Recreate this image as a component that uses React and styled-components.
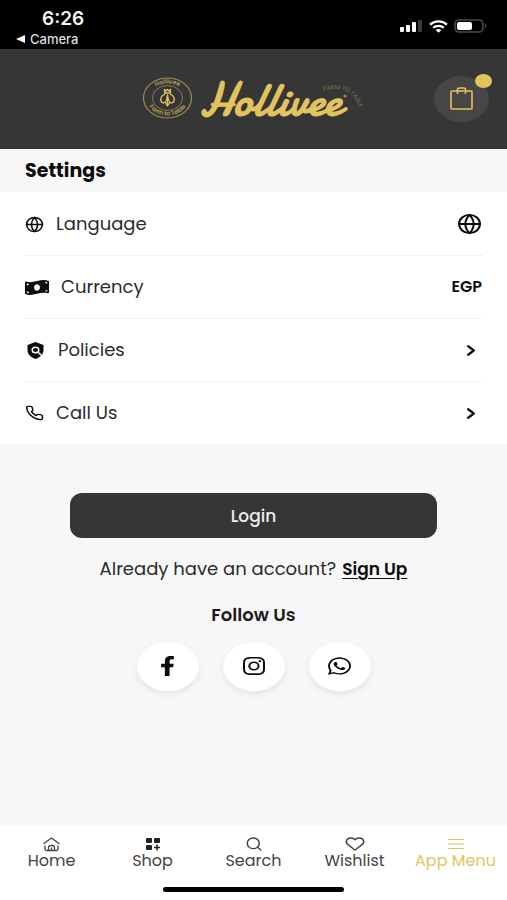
import React from "react";
import styled, { createGlobalStyle } from "styled-components";
import { FaFacebookF, FaMoneyBillWave, FaWhatsapp } from "react-icons/fa";
import { BsInstagram } from "react-icons/bs";
import { FiGlobe, FiHeart, FiPhone, FiSearch, FiChevronRight } from "react-icons/fi";

const gold = "#e2c45f";
const dark = "#363636";

const GlobalStyle = createGlobalStyle`
  * {
    box-sizing: border-box;
  }

  body {
    margin: 0;
    background: #f7f7f7;
    color: #2b2b2b;
    font-family: Poppins, Inter, "Open Sans", sans-serif;
    font-size: 18px;
    line-height: 24px;
  }
`;

const Page = styled.div`
  display: flex;
  flex-direction: column;
  min-height: 100vh;
`;

const Main = styled.main`
  display: flex;
  flex: 1;
  flex-direction: column;
`;

const StatusBar = styled.div`
  display: flex;
  justify-content: space-between;
  height: 49px;
  padding: 10px 20px 0 16px;
  background: #000;
  color: #f4f4f4;
  font-family: Inter, sans-serif;
`;

const Clock = styled.div`
  padding-left: 26px;
  font-size: 19px;
  font-weight: 600;
  line-height: 18px;
`;

const BackLink = styled.a`
  display: flex;
  align-items: center;
  gap: 5px;
  color: #ddd;
  font-size: 13px;
  font-weight: 500;
  line-height: 22px;
  text-decoration: none;
`;

const Signals = styled.div`
  display: flex;
  align-items: center;
  gap: 6px;
  height: 32px;
`;

const TopBar = styled.header`
  display: grid;
  grid-template-columns: 1fr auto 1fr;
  align-items: center;
  height: 100px;
  padding: 0 18px;
  background: ${dark};
`;

const BagButton = styled.button`
  position: relative;
  display: flex;
  align-items: center;
  justify-content: center;
  justify-self: end;
  width: 55px;
  height: 46px;
  padding: 0;
  border: 0;
  border-radius: 50%;
  background: #474645;
  color: ${gold};
`;

const Badge = styled.span`
  position: absolute;
  top: -2px;
  right: -3px;
  width: 17px;
  height: 14px;
  border-radius: 50%;
  background: ${gold};
`;

const Glyph = styled.span`
  display: flex;

  svg {
    width: ${(props) => props.$width}px;
    height: ${(props) => props.$height}px;
  }
`;

const Title = styled.h1`
  margin: 0;
  padding: 10px 25px 9px;
  color: #0c0c0c;
  font-size: 19px;
  font-weight: 700;
  line-height: 24px;
`;

const List = styled.ul`
  margin: 0;
  padding: 1px 24px 0;
  background: #fff;
  list-style: none;
`;

const Item = styled.li`
  & + & {
    border-top: 1px solid #f1f1f1;
  }
`;

const RowButton = styled.button`
  display: flex;
  align-items: center;
  width: 100%;
  height: 62px;
  padding: 0 1px;
  border: 0;
  background: none;
  color: #0c0c0c;
  font: inherit;
`;

const RowLabel = styled.span`
  flex: 1;
  margin-left: 12px;
  color: #2b2b2b;
  text-align: left;
`;

const RowValue = styled.span`
  display: flex;
  font-size: 16px;
  font-weight: 600;
`;

const Account = styled.section`
  display: flex;
  flex: 1;
  flex-direction: column;
  align-items: center;
  padding: 49px 70px 0;
`;

const LoginButton = styled.button`
  width: 100%;
  height: 45px;
  border: 0;
  border-radius: 12px;
  background: ${dark};
  color: #eee;
  font: inherit;
  font-size: 17px;
  font-weight: 500;
`;

const SignUpText = styled.p`
  margin: 19px 0 0;
  white-space: nowrap;
`;

const SignUpLink = styled.a`
  margin-left: 6px;
  color: #0c0c0c;
  font-size: 17px;
  font-weight: 600;
  text-underline-offset: 3px;
`;

const FollowTitle = styled.h2`
  margin: 22px 0 15px;
  color: #1c1c1c;
  font-size: 18px;
  font-weight: 600;
  line-height: 24px;
`;

const SocialLinks = styled.div`
  display: flex;
  gap: 24px;
`;

const SocialLink = styled.a`
  display: flex;
  align-items: center;
  justify-content: center;
  width: 62px;
  height: 49px;
  padding-bottom: 2px;
  border-radius: 50%;
  background: #fff;
  box-shadow: 0 3px 6px rgba(0, 0, 0, 0.08);
  color: #0c0c0c;
`;

const BottomBar = styled.footer`
  padding: 10px 1px 8px;
  background: #fff;
`;

const Tabs = styled.nav`
  display: grid;
  grid-template-columns: repeat(5, 1fr);
`;

const Tab = styled.a`
  display: flex;
  flex-direction: column;
  align-items: center;
  color: ${(props) => (props.$active ? gold : "#444")};
  font-size: 16px;
  line-height: 18px;
  text-decoration: none;
  white-space: nowrap;
`;

const HomeIndicator = styled.div`
  width: 36%;
  height: 5px;
  margin: 17px auto 0;
  border-radius: 3px;
  background: #000;
`;

function StatusIcons() {
  return (
    <Signals>
      <svg width="23" height="12" viewBox="0 0 23 12" fill="#fff">
        <rect y="7" width="4" height="5" rx="1" />
        <rect x="6" y="5" width="4" height="7" rx="1" />
        <rect x="12" y="2" width="4" height="10" rx="1" />
        <rect x="18" width="4" height="12" rx="1" fill="#3a3a3a" />
      </svg>
      <svg width="19" height="13" viewBox="0 0 19 13" fill="none" stroke="#fff" strokeWidth="2.2">
        <path d="M1 4.6C5.8.3 13.2.3 18 4.6" />
        <path d="M4.2 7.8c3-2.7 7.6-2.7 10.6 0" />
        <path d="M9.5 12.8 6.7 10c1.6-1.3 4-1.3 5.6 0z" fill="#fff" stroke="none" />
      </svg>
      <svg width="33" height="14" viewBox="0 0 33 14">
        <rect x="1" y="1" width="28" height="12" rx="4" fill="none" stroke="#4a4a4a" strokeWidth="1.6" />
        <rect x="3" y="3" width="15" height="8" rx="2" fill="#fff" />
        <path d="M31 4.6c2 .8 2 4 0 4.8z" fill="#4a4a4a" />
      </svg>
    </Signals>
  );
}

function Logo() {
  return (
    <svg width="224" height="72" viewBox="0 -10 224 72" role="img" aria-label="Hollivee">
      <defs>
        <path id="seal-top" d="M6.500 25a19 14.500 0 0 1 38 0" />
        <path id="seal-bottom" d="M4.500 25a21 17.500 0 0 0 42 0" />
        <path id="tagline" d="M182 18Q213 10 218 40" />
      </defs>
      <g fill="none" stroke="#9f8d50">
        <ellipse cx="25.500" cy="25" rx="24" ry="20" strokeWidth="1.200" />
        <ellipse cx="25.500" cy="25" rx="15" ry="12.500" strokeWidth=".8" />
      </g>
      <g fill="#b5a05a" fontFamily="Poppins, sans-serif" fontSize="6" fontWeight="600" textAnchor="middle">
        <text>
          <textPath href="#seal-top" startOffset="50%">Hollivee</textPath>
        </text>
        <text>
          <textPath href="#seal-bottom" startOffset="50%">Farm to Table</textPath>
        </text>
      </g>
      <g fill="none" stroke={gold} strokeWidth="1.300" strokeLinejoin="round">
        <path d="M22.500 16.500v3.500h6v-3.500l-1.500 1.500-1.500-1.500-1.500 1.500z" />
        <path d="M23 21c-5 2-5.500 7-2 9 3 0 4-3 4.500-8 .5 5 1.500 8 4.500 8 3.500-2 3-7-2-9" />
        <path d="M23 29l2.500 4 2.500-4M25.500 22v10" />
      </g>
      <text
        x="58"
        y="42"
        fill={gold}
        stroke={gold}
        strokeWidth="1"
        strokeLinejoin="round"
        fontFamily="Yellowtail, Damion, Pacifico, 'Dancing Script', Lato, sans-serif"
        fontSize="48"
      >
        Hollivee
      </text>
      <circle cx="203" cy="23" r="1.500" fill="#9f8d50" />
      <text fill="#87784a" fontFamily="Poppins, sans-serif" fontSize="6">
        <textPath href="#tagline">FARM TO TABLE</textPath>
      </text>
    </svg>
  );
}

function BagIcon() {
  return (
    <svg width="24" height="24" viewBox="0 0 24 24" fill="none" stroke="currentColor" strokeWidth="1.600">
      <rect x="1" y="4" width="21" height="18" rx="1" />
      <path d="M7.500 7V2.500Q7.500 1 9.500 1h4q2 0 2 1.500V7" />
    </svg>
  );
}

function PolicyIcon() {
  return (
    <svg viewBox="0 0 20 17">
      <path d="M10 0 18 3v5c0 4-3 7.500-8 9-5-1.500-8-5-8-9V3z" fill="currentColor" />
      <ellipse cx="10" cy="8" rx="3.300" ry="2.800" fill="none" stroke="#fff" strokeWidth="1.500" />
      <path d="m12.200 10 4.500 4" stroke="#fff" strokeWidth="1.600" />
    </svg>
  );
}

function HomeIcon() {
  return (
    <svg viewBox="0 0 17 16" fill="none" stroke="currentColor" strokeWidth="1.300">
      <path d="M1 7.500 8.500 2 16 7.500" strokeLinecap="round" />
      <path d="M2 9.500v3.500q0 1.500 1.500 1.500h10q1.500 0 1.500-1.500V9.500" />
      <path d="M5.500 14.500v-3q0-2 3-2t3 2v3M8.500 11.500v3" />
    </svg>
  );
}

function ShopIcon() {
  return (
    <svg viewBox="0 0 16 16" fill="#222">
      <rect x="1" y="2" width="6" height="5" rx="1" />
      <rect x="9" y="2" width="6" height="5" rx="1" />
      <rect x="1" y="9" width="6" height="5" rx="1" />
      <path d="M12 8.500v6M9 11.500h6" stroke="#222" strokeWidth="1.500" />
    </svg>
  );
}

function MenuIcon() {
  return (
    <svg viewBox="0 0 16 16" stroke="currentColor" strokeWidth="1.200">
      <path d="M0 3.500h16M0 8h16M0 12.500h16" />
    </svg>
  );
}

function icon(Icon, width, height, props) {
  return (
    <Glyph $width={width} $height={height}>
      <Icon preserveAspectRatio="none" {...props} />
    </Glyph>
  );
}

const chevron = icon(FiChevronRight, 22, 17, { strokeWidth: 3 });

const settings = [
  { label: "Language", icon: icon(FiGlobe, 19, 17), value: icon(FiGlobe, 25, 22) },
  { label: "Currency", icon: icon(FaMoneyBillWave, 24, 17), value: "EGP" },
  { label: "Policies", icon: icon(PolicyIcon, 21, 17), value: chevron },
  { label: "Call Us", icon: icon(FiPhone, 19, 16), value: chevron },
];

const socials = [
  { label: "Facebook", icon: icon(FaFacebookF, 15, 20) },
  { label: "Instagram", icon: icon(BsInstagram, 22, 18) },
  { label: "WhatsApp", icon: icon(FaWhatsapp, 23, 20) },
];

const tabs = [
  { label: "Home", icon: icon(HomeIcon, 17, 16) },
  { label: "Shop", icon: icon(ShopIcon, 16, 16) },
  { label: "Search", icon: icon(FiSearch, 18, 16) },
  { label: "Wishlist", icon: icon(FiHeart, 20, 16) },
  { label: "App Menu", icon: icon(MenuIcon, 16, 16), active: true },
];

function App() {
  return (
    <Page>
      <GlobalStyle />
      <StatusBar>
        <div>
          <Clock>6:26</Clock>
          <BackLink href="#camera">
            <svg width="9" height="8" viewBox="0 0 9 8" fill="#fff">
              <path d="M9 0v8L0 4z" />
            </svg>
            Camera
          </BackLink>
        </div>
        <StatusIcons />
      </StatusBar>
      <TopBar>
        <span />
        <Logo />
        <BagButton aria-label="Shopping bag">
          <BagIcon />
          <Badge />
        </BagButton>
      </TopBar>
      <Main>
        <Title>Settings</Title>
        <List>
          {settings.map(({ label, icon, value }) => (
            <Item key={label}>
              <RowButton>
                {icon}
                <RowLabel>{label}</RowLabel>
                <RowValue>{value}</RowValue>
              </RowButton>
            </Item>
          ))}
        </List>
        <Account>
          <LoginButton>Login</LoginButton>
          <SignUpText>
            Already have an account?
            <SignUpLink href="#signup">Sign Up</SignUpLink>
          </SignUpText>
          <FollowTitle>Follow Us</FollowTitle>
          <SocialLinks>
            {socials.map(({ label, icon }) => (
              <SocialLink key={label} href={`#${label}`} aria-label={label}>
                {icon}
              </SocialLink>
            ))}
          </SocialLinks>
        </Account>
      </Main>
      <BottomBar>
        <Tabs>
          {tabs.map(({ label, icon, active }) => (
            <Tab key={label} href={`#${label}`} $active={active}>
              {icon}
              {label}
            </Tab>
          ))}
        </Tabs>
        <HomeIndicator />
      </BottomBar>
    </Page>
  );
}

export default App;
